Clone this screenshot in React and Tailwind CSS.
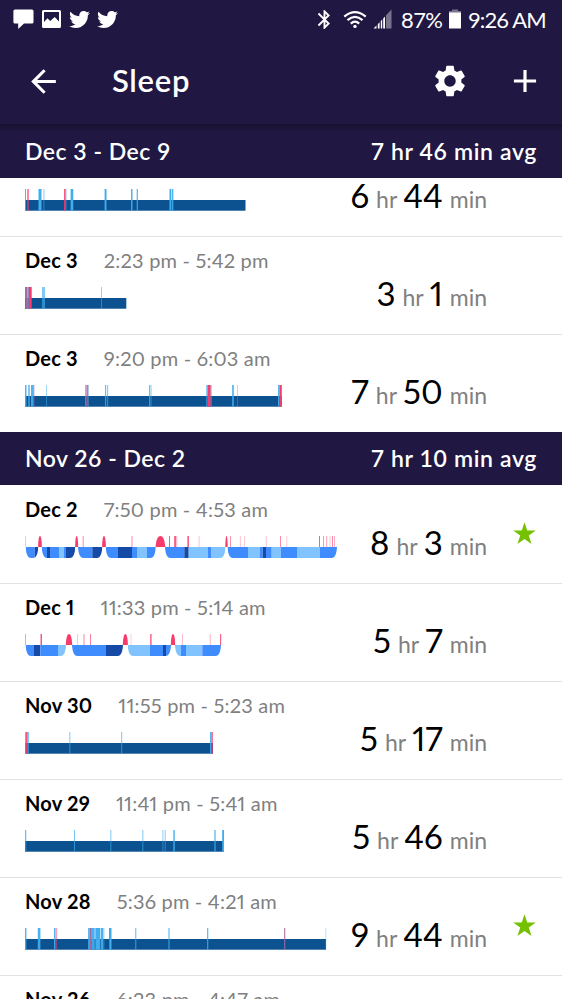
import React from 'react';
import { MdAdd, MdArrowBack, MdBluetooth, MdSettings } from 'react-icons/md';
import { FaTwitter } from 'react-icons/fa';

const COLORS = {
  a: '#0c5290', // asleep
  b: '#3fadee', // restless
  r: '#f73c6d', // awake
  p: '#a06c9f', // awake + restless
  L: '#80c3ff', // light
  M: '#3f8cff', // rem
  D: '#154ba6', // deep
};

// ticks: [x, width, color, opacity]
const weeks = [
  {
    range: 'Dec 3 - Dec 9',
    avg: '7 hr 46 min avg',
    logs: [
      {
        hr: 6, min: 44, clipped: true, width: 220.5,
        ticks: [[0, 1, 'b', 0.9], [2, 2, 'r', 0.6], [13, 1, 'b', 0.5], [14, 2.5, 'b', 1], [18, 1.7, 'b', 0.35], [39, 1.7, 'r', 0.85], [40.7, 0.8, 'b', 0.6], [45, 1, 'b', 0.4], [46, 2, 'b', 1], [48, 0.7, 'b', 0.4], [79, 1, 'b', 0.4], [80, 1.3, 'b', 1], [81.3, 0.7, 'b', 0.4], [106, 1.3, 'b', 0.9], [107.3, 0.7, 'b', 0.4], [111.7, 1.2, 'b', 0.9], [144, 0.8, 'b', 0.5], [144.8, 1.2, 'b', 1], [146.6, 1.3, 'b', 1], [147.9, 0.7, 'b', 0.5]],
      },
      {
        date: 'Dec 3', time: '2:23 pm - 5:42 pm', hr: 3, min: 1, width: 101.3,
        ticks: [[0, 1, 'r', 0.9], [1, 1, 'p', 1], [2, 1.7, 'b', 0.8], [3.3, 0.7, 'p', 1], [4, 2.7, 'r', 1], [17, 3, 'b', 0.65], [76, 1, 'b', 0.55]],
      },
      {
        date: 'Dec 3', time: '9:20 pm - 6:03 am', hr: 7, min: 50, width: 256.7,
        ticks: [[0, 1.5, 'b', 0.9], [3, 2, 'b', 0.65], [6, 2.2, 'b', 0.9], [8.2, 1.1, 'p', 0.8], [21, 1, 'b', 0.5], [60, 1.5, 'b', 0.7], [61.5, 1.7, 'r', 0.8], [63.2, 0.7, 'b', 0.6], [80, 1.2, 'b', 0.8], [82, 1.2, 'b', 0.6], [124, 1.2, 'b', 0.8], [125.4, 1.4, 'b', 0.4], [181, 1.4, 'b', 0.6], [182.4, 3.3, 'r', 1], [185.7, 1.1, 'b', 0.6], [207.2, 1.6, 'b', 0.95], [212, 1, 'b', 0.4], [253, 1.5, 'b', 0.9], [254.5, 2.3, 'r', 1]],
      },
    ],
  },
  {
    range: 'Nov 26 - Dec 2',
    avg: '7 hr 10 min avg',
    logs: [
      {
        date: 'Dec 2', time: '7:50 pm - 4:53 am', hr: 8, min: 3, star: true, width: 312,
        groups: [
          [[0.6, 'M'], [9.7, 'D'], [13.3]],
          [[16.7, 'M'], [22, 'D'], [25, 'M'], [34, 'L'], [38.7, 'M'], [41, 'D'], [50.3]],
          [[53, 'M'], [67.3, 'D'], [77.3]],
          [[80.7, 'M'], [93, 'D'], [107, 'M'], [112, 'L'], [122, 'M'], [130.8]],
          [[140, 'M'], [159.3, 'D'], [163.7, 'L'], [183, 'M'], [186, 'L'], [200.5]],
          [[202.5, 'M'], [223, 'L'], [234.7, 'M'], [237.7, 'D'], [241, 'M'], [246.7, 'L'], [256, 'M'], [272, 'L'], [295, 'M'], [312]],
        ],
        ticks: [[0, 1, 'r', 0.3], [57.5, 1.5, 'r', 0.4], [106.3, 1.5, 'r', 0.4], [144, 1, 'r', 0.8], [149.2, 1.7, 'r', 0.9], [151.2, 1, 'r', 0.4], [162.4, 1.5, 'r', 0.9], [173.5, 1.2, 'r', 0.25], [205, 1, 'r', 0.55], [214.8, 1.2, 'r', 0.25], [219, 1, 'r', 0.25], [240.8, 1, 'r', 0.3], [255, 1, 'r', 0.6], [261.2, 1, 'r', 0.25], [294, 1, 'r', 0.8], [298, 1, 'r', 0.55], [301, 1.2, 'r', 0.4], [304.5, 1, 'r', 0.3], [307, 1, 'r', 0.6], [309, 1, 'r', 0.4]],
      },
      {
        date: 'Dec 1', time: '11:33 pm - 5:14 am', hr: 5, min: 7, width: 196,
        groups: [
          [[0.6, 'M'], [9, 'D'], [15.3, 'M'], [33, 'L'], [41]],
          [[47, 'M'], [81, 'D'], [98]],
          [[102.7, 'L'], [125, 'M'], [138, 'D'], [141, 'M'], [146]],
          [[150, 'L'], [156, 'M'], [161, 'L'], [177.3, 'M'], [196]],
        ],
        ticks: [[0, 1, 'r', 0.5], [15.5, 1.5, 'r', 0.85], [52, 1, 'r', 0.3], [58.5, 1, 'r', 0.6], [65, 1, 'r', 0.65], [105.5, 1, 'r', 0.25], [125.2, 1.4, 'r', 0.85], [157, 1, 'r', 0.35], [184.7, 1, 'r', 0.4], [195, 1.2, 'r', 0.8]],
      },
      {
        date: 'Nov 30', time: '11:55 pm - 5:23 am', hr: 5, min: 17, width: 188,
        ticks: [[0, 1, 'b', 0.8], [1, 1.6, 'r', 0.9], [2.6, 1.2, 'b', 0.8], [44, 1.5, 'b', 0.45], [96, 1.2, 'b', 0.6], [185, 1.3, 'b', 0.9], [186.3, 1.6, 'r', 0.8]],
      },
      {
        date: 'Nov 29', time: '11:41 pm - 5:41 am', hr: 5, min: 46, width: 199,
        ticks: [[0, 0.8, 'r', 0.7], [0.6, 0.7, 'b', 0.7], [49, 1, 'b', 0.7], [85, 1.5, 'b', 0.45], [117, 1.5, 'b', 0.45], [137, 1.7, 'b', 0.35], [139.7, 1.2, 'b', 0.5], [148.3, 1.5, 'b', 0.9], [189.3, 1.4, 'b', 0.8], [197.2, 1.8, 'b', 1]],
      },
      {
        date: 'Nov 28', time: '5:36 pm - 4:21 am', hr: 9, min: 44, star: true, width: 301,
        ticks: [[0, 1.4, 'b', 0.9], [12.8, 2.6, 'b', 0.95], [29, 1.4, 'b', 0.9], [30.6, 1.5, 'r', 0.5], [63, 2, 'b', 0.85], [65, 1.8, 'p', 1], [66.8, 2.2, 'b', 0.95], [69, 1.5, 'b', 0.7], [70.5, 4.5, 'b', 1], [75.6, 2.4, 'b', 0.95], [78, 1.5, 'b', 0.45], [84, 1, 'p', 0.9], [85, 1.5, 'b', 1], [110, 1.4, 'b', 0.6], [143.3, 1.4, 'b', 0.7], [182, 1.3, 'b', 0.8], [259, 1.3, 'p', 0.8], [300.3, 1, 'b', 0.35]],
      },
      { date: 'Nov 26', time: '6:23 pm - 4:47 am' },
    ],
  },
];

// Rounded-bottom outline of one stretch of sleep stages
const basin = (x1, x2) => {
  const c = Math.min(5.5, (x2 - x1) / 2);
  return `M${x1} 11 C${x1 + 0.4} 17 ${x1 + 1.6} 22 ${x1 + c} 22 H${x2 - c} C${x2 - 1.6} 22 ${x2 - 0.4} 17 ${x2} 11 Z`;
};

const peak = (x1, x2) => {
  const m = (x1 + x2) / 2;
  const w = (x2 - x1) / 2;
  return `M${x1} 11 C${x1 + w * 0.1} 4 ${m - w * 0.6} 0 ${m} 0 C${m + w * 0.6} 0 ${x2 - w * 0.1} 4 ${x2} 11 Z`;
};

const StageChart = ({ id, groups }) => (
  <>
    {groups.map((group, i) => {
      const start = group[0][0];
      const end = group[group.length - 1][0];
      const next = groups[i + 1];
      return (
        <g key={i}>
          <clipPath id={`${id}-${i}`}>
            <path d={basin(start, end)} />
          </clipPath>
          <g clipPath={`url(#${id}-${i})`}>
            {group.slice(0, -1).map(([x, stage], j) => (
              <rect key={j} x={x} y="11" width={group[j + 1][0] - x} height="11" fill={COLORS[stage]} />
            ))}
          </g>
          {next && <path d={peak(end - 0.2, next[0][0] + 0.2)} fill={COLORS.r} />}
        </g>
      );
    })}
  </>
);

const SleepChart = ({ id, log }) => (
  <svg className="block h-[22px] w-[314px]" viewBox="0 0 314 22">
    {log.groups ? (
      <StageChart id={id} groups={log.groups} />
    ) : (
      <rect x="0" y="11" width={log.width} height="10.7" fill={COLORS.a} />
    )}
    {log.ticks.map(([x, w, color, opacity], i) => (
      <rect key={i} x={x} y="0" width={w} height={log.groups ? 11 : 21.7} fill={COLORS[color]} opacity={opacity} />
    ))}
  </svg>
);

// A clipped row is partly scrolled under the week header
const SleepRow = ({ id, log, first }) => (
  <div
    className={`flex w-full shrink-0 border-t pl-[25px] proportional-nums ${
      log.clipped ? 'h-[58px]' : 'h-[98px]'
    } ${first ? 'border-transparent' : 'border-[#e2e2e2]'}`}
  >
    <div className={log.clipped ? 'w-[314px] pt-[10px]' : 'w-[314px] pt-[11px]'}>
      {log.date && (
        <div className="mb-[15px] flex h-[24px] items-center whitespace-nowrap text-[20px] leading-6">
          <span className="font-bold tracking-[0.2px] text-black">{log.date}</span>
          <span className="ml-[26px] tracking-[0.2px] text-[#808080]">{log.time}</span>
        </div>
      )}
      {log.ticks && <SleepChart id={id} log={log} />}
    </div>
    {log.hr && (
      <div
        className={`flex w-[148px] items-baseline justify-end whitespace-nowrap leading-10 ${
          log.clipped ? '-mt-[4px]' : 'pt-[36px]'
        }`}
      >
        <span className="text-[33px] text-black">{log.hr}</span>
        <span className="ml-[7px] text-[23px] text-[#808080]">hr</span>
        <span className="ml-[6px] text-[33px] text-black">{log.min}</span>
        <span className="ml-[7px] text-[23px] text-[#808080]">min</span>
      </div>
    )}
    {log.star && (
      <svg className="ml-[26px] mt-[36px] h-[23px] w-[23px]" viewBox="0 0 23 23" fill="#74c100">
        <path d="M11.5 0.3 L14.2 8.5 H22.8 L15.8 13.6 L18.5 22 L11.5 16.9 L4.5 22 L7.2 13.6 L0.2 8.5 H8.8 Z" />
      </svg>
    )}
  </div>
);

const WeekHeader = ({ week, first }) => (
  <div
    className={`flex shrink-0 items-center justify-between px-[25px] text-[23px] font-semibold text-white ${
      first ? 'h-[54px] bg-linear-to-b from-[#17122f] to-[#201842] to-15%' : 'h-[53px] bg-[#201842]'
    }`}
  >
    <span className="tracking-[0.5px]">{week.range}</span>
    <span className="tracking-[0.65px]">{week.avg}</span>
  </div>
);

const StatusBar = () => (
  <div className="flex h-[38px] items-center justify-between pl-[13px] pr-[16px] text-white">
    <div className="flex items-center">
      <svg className="h-[20px] w-[21px]" viewBox="0 0 21 20" fill="currentColor">
        <path d="M2 0.5 H19 Q20.5 0.5 20.5 2 V13 Q20.5 14.5 19 14.5 H11 L5.2 20 V14.5 H2 Q0.4 14.5 0.4 13 V2 Q0.4 0.5 2 0.5 Z" />
      </svg>
      <svg className="ml-[8px] h-[20px] w-[19px]" viewBox="0 0 19 20">
        <path fill="currentColor" fillRule="evenodd" d="M1.5 1 H17.5 Q19 1 19 2.5 V17.5 Q19 19 17.5 19 H1.5 Q0 19 0 17.5 V2.5 Q0 1 1.5 1 Z M2 3 V13 L5.5 9.2 L8.2 12 L12.7 8 L17 12.6 V3 Z" />
      </svg>
      <FaTwitter className="ml-[8px] h-[21px] w-[21px]" />
      <FaTwitter className="ml-[7px] h-[21px] w-[21px]" />
    </div>
    <div className="flex items-center">
      <MdBluetooth className="h-[23px] w-[23px]" />
      <svg className="ml-[7px] h-[19px] w-[24px]" viewBox="0 0 24 19" fill="none" stroke="currentColor" strokeWidth="2.2">
        <path d="M1.3 6.6 Q12 -2.4 22.7 6.6" />
        <path d="M4.5 10.2 Q12 3.6 19.5 10.2" />
        <path d="M7.8 13.6 Q12 9.8 16.2 13.6" />
        <circle cx="12" cy="16.4" r="1.7" fill="currentColor" stroke="none" />
      </svg>
      <svg className="ml-[6px] h-[20px] w-[19px]" viewBox="0 0 19 20" fill="currentColor">
        <path d="M13 6.2 L18.5 0.5 V19.5 H13 Z" opacity="0.4" />
        <path d="M0.5 19.5 L3.5 16.5 V19.5 Z M4.8 15.2 L6.6 13.3 V19.5 H4.8 Z M7.8 12 L9.2 10.5 V19.5 H7.8 Z M10.2 9.4 L12 7.6 V19.5 H10.2 Z" />
      </svg>
      <span className="ml-[9px] w-[42px] whitespace-nowrap text-[22px] tracking-[-0.6px]">87%</span>
      <svg className="ml-[6px] h-[20px] w-[12px]" viewBox="0 0 12 20" fill="currentColor">
        <path d="M3 0.5 H9 V2 H12 V4 H0 V2 H3 Z" opacity="0.4" />
        <path d="M0 3.5 H12 V19.5 H0 Z" />
      </svg>
      <span className="ml-[7px] w-[78px] whitespace-nowrap text-[22px] tracking-[-0.9px]">9:26 AM</span>
    </div>
  </div>
);

const App = () => {
  return (
    <div className="flex h-[999px] w-[562px] flex-col overflow-hidden bg-white font-['Lato','Open_Sans',sans-serif]">
      <div className="h-[124px] shrink-0 bg-[#201842] text-white">
        <StatusBar />
        <div className="flex h-[86px] items-center pl-[25px] pr-[18px]">
          <MdArrowBack className="h-[37px] w-[37px]" />
          <h1 className="ml-[50px] -mt-[2px] flex-1 text-[31px] font-semibold tracking-[0.7px]">Sleep</h1>
          <MdSettings className="h-[38px] w-[38px]" />
          <MdAdd className="ml-[37px] h-[38px] w-[38px]" />
        </div>
      </div>
      {weeks.map((week, w) => (
        <React.Fragment key={week.range}>
          <WeekHeader week={week} first={w === 0} />
          {week.logs.map((log, i) => (
            <SleepRow key={i} id={`c${w}-${i}`} log={log} first={i === 0} />
          ))}
        </React.Fragment>
      ))}
    </div>
  );
};

export default App;
